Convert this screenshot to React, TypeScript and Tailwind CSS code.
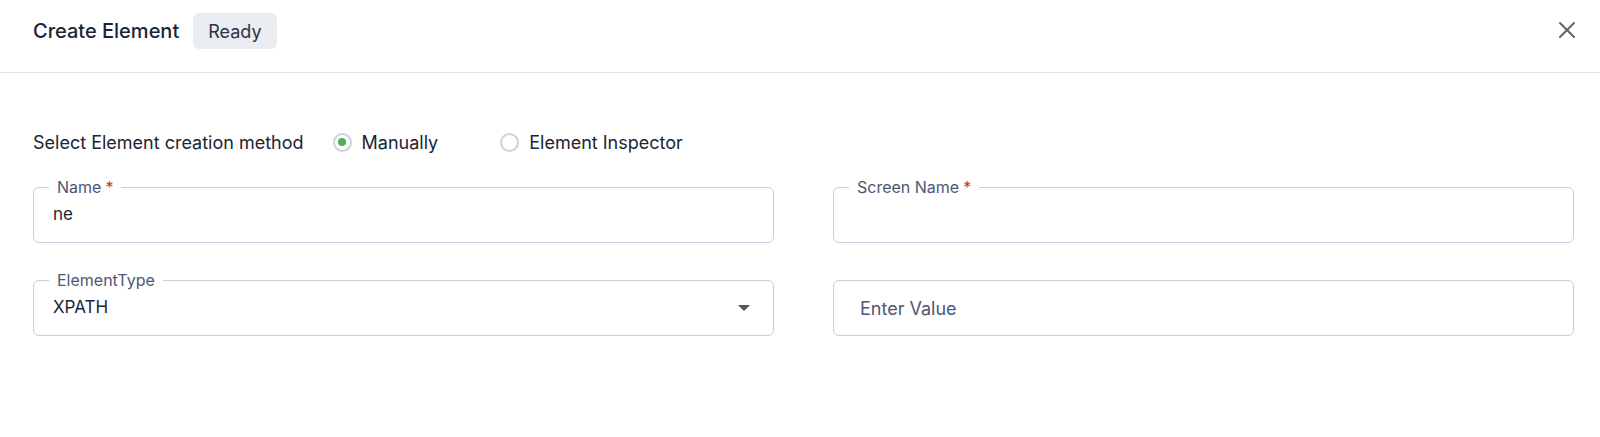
import { X } from "lucide-react";

function Radio({ checked, label }: { checked?: boolean; label: string }) {
  return (
    <label className="flex items-center gap-[10px] cursor-pointer">
      <span className="flex h-[19px] w-[19px] items-center justify-center rounded-full border-2 border-[#c9d4df] bg-white">
        {checked && <span className="h-2 w-2 rounded-full bg-[#4caf50]" />}
      </span>
      <span className="text-[18px] text-[#1d2433]">{label}</span>
    </label>
  );
}

function Field({
  label,
  required,
  value,
  placeholder,
  select,
}: {
  label?: string;
  required?: boolean;
  value?: string;
  placeholder?: string;
  select?: boolean;
}) {
  return (
    <div className="relative flex h-[56px] items-center rounded-md border border-[#c3d0de] bg-white">
      {label && (
        <span className="absolute -top-[12px] left-[15px] bg-white px-[8px] text-[16px] leading-[22px] text-[#4b5876]">
          {label}
          {required && <span className="ml-[4px] text-[#d32f2f]">*</span>}
        </span>
      )}
      {value !== undefined ? (
        <span className="flex-1 pl-[19px] text-[17px] text-[#1d2433]">{value}</span>
      ) : (
        <span className="flex-1 pl-[26px] text-[18px] text-[#4b5876]">{placeholder}</span>
      )}
      {select && (
        <svg className="mr-[23px] h-[6px] w-[12px]" viewBox="0 0 12 6">
          <path d="M0 0h12L6 6z" fill="#555" />
        </svg>
      )}
    </div>
  );
}

export default function App() {
  return (
    <div className="min-h-screen bg-white font-['Inter','Liberation_Sans',sans-serif]">
      <header className="flex items-center border-b border-[#e1e4e9] pt-[13px] pb-[23px] pl-[33px] pr-[19px]">
        <h1 className="text-[20px] font-medium text-[#1c2536]">Create Element</h1>
        <span className="ml-[14px] flex h-[36px] items-center rounded-md bg-[#e9ecf1] px-[15px] text-[18px] text-[#2a3447]">
          Ready
        </span>
        <button className="-mt-[3px] ml-auto text-[#5c6573]">
          <X className="h-[28px] w-[28px]" strokeWidth={1.7} />
        </button>
      </header>

      <div className="pt-[57px] pl-[33px] pr-[26px]">
        <div className="flex h-[24px] items-center">
          <span className="mr-[29px] text-[18px] text-[#1d2433]">Select Element creation method</span>
          <div className="flex items-center gap-[62px]">
            <Radio checked label="Manually" />
            <Radio label="Element Inspector" />
          </div>
        </div>

        <div className="mt-[33px] grid grid-cols-2 gap-x-[59px] gap-y-[37px]">
          <Field label="Name" required value="ne" />
          <Field label="Screen Name" required value="" />
          <Field label="ElementType" value="XPATH" select />
          <Field placeholder="Enter Value" />
        </div>
      </div>
    </div>
  );
}
